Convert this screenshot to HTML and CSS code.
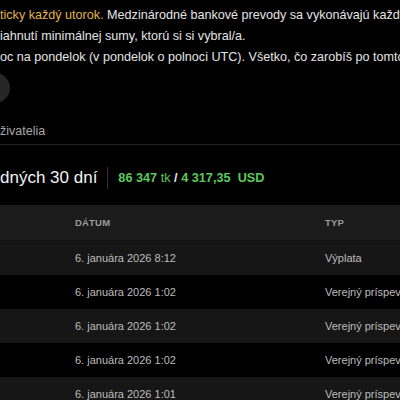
FILE: index.html
```html
<!DOCTYPE html>
<html lang="sk">
<head>
<meta charset="utf-8">
<link rel="stylesheet" href="styles.css">
</head>
<body>
<div class="page">
  <div class="notice">
    <p class="line"><span class="hl">ticky každý utorok.</span> Medzinárodné bankové prevody sa vykonávajú každý</p>
    <p class="line">iahnutí minimálnej sumy, ktorú si si vybral/a.</p>
    <p class="line">oc na pondelok (v pondelok o polnoci UTC). Všetko, čo zarobíš po tomto</p>
  </div>
  <div class="avatar-row"><span class="avatar"></span></div>
  <div class="tabs"><span class="tab">živatelia</span></div>
  <div class="summary">
    <h2 class="title">dných 30 dní</h2>
    <span class="divider"></span>
    <span class="amount"><b>86 347</b> <span class="unit">tk</span> <span class="slash">/</span> <b>4 317,35</b>&nbsp; <b>USD</b></span>
  </div>
  <div class="table">
    <div class="row head"><span class="c-date">DÁTUM</span><span class="c-type">TYP</span></div>
    <div class="row alt"><span class="c-date">6. januára 2026 8:12</span><span class="c-type">Výplata</span></div>
    <div class="row"><span class="c-date">6. januára 2026 1:02</span><span class="c-type">Verejný príspevok</span></div>
    <div class="row alt"><span class="c-date">6. januára 2026 1:02</span><span class="c-type">Verejný príspevok</span></div>
    <div class="row"><span class="c-date">6. januára 2026 1:02</span><span class="c-type">Verejný príspevok</span></div>
    <div class="row alt"><span class="c-date">6. januára 2026 1:01</span><span class="c-type">Verejný príspevok</span></div>
  </div>
</div>
</body>
</html>
```
FILE: styles.css
```css
html, body {
  margin: 0;
  padding: 0;
  background: #000;
}
body {
  font-family: "Liberation Sans", Arial, sans-serif;
  color: #e6e6e6;
  width: 400px;
  height: 400px;
  overflow: hidden;
}
.page {
  display: flex;
  flex-direction: column;
}
.notice {
  padding-top: 5px;
}
.line {
  margin: 0;
  font-size: 12.6px;
  line-height: 21px;
  white-space: nowrap;
  overflow: hidden;
  color: #e4e4e4;
}
.hl {
  color: #e2b24c;
}
.avatar-row {
  margin-top: 5px;
  height: 30px;
}
.avatar {
  display: block;
  width: 30px;
  height: 30px;
  border-radius: 50%;
  background: #262626;
  margin-left: -20px;
}
.tabs {
  margin-top: 14px;
  height: 27px;
  border-bottom: 1px solid #232323;
  display: flex;
  align-items: center;
}
.tab {
  font-size: 12.5px;
  color: #a8a8a8;
}
.summary {
  height: 60px;
  box-sizing: border-box;
  padding-top: 6px;
  display: flex;
  align-items: center;
  gap: 10px;
}
.title {
  margin: 0;
  font-size: 17px;
  font-weight: 400;
  color: #f2f2f2;
}
.divider {
  width: 1px;
  height: 22px;
  background: #333;
}
.amount {
  font-size: 12.7px;
  color: #5cc95c;
}
.amount b {
  font-weight: 700;
}
.unit {
  font-weight: 400;
}
.slash {
  color: #e6e6e6;
  font-weight: 700;
}
.table {
  display: flex;
  flex-direction: column;
}
.row {
  display: grid;
  grid-template-columns: 75px 250px 1fr;
  align-items: center;
  height: 34px;
  font-size: 11px;
  color: #bdbdbd;
  white-space: nowrap;
  overflow: hidden;
}
.row .c-date { grid-column: 2; }
.row .c-type { grid-column: 3; }
.row.head {
  height: 35px;
  background: #1b1b1b;
  font-size: 9.5px;
  font-weight: 700;
  color: #9a9a9a;
  letter-spacing: 0.2px;
  border-bottom: 1px solid #111;
}
.row.alt {
  background: #161616;
}
```
